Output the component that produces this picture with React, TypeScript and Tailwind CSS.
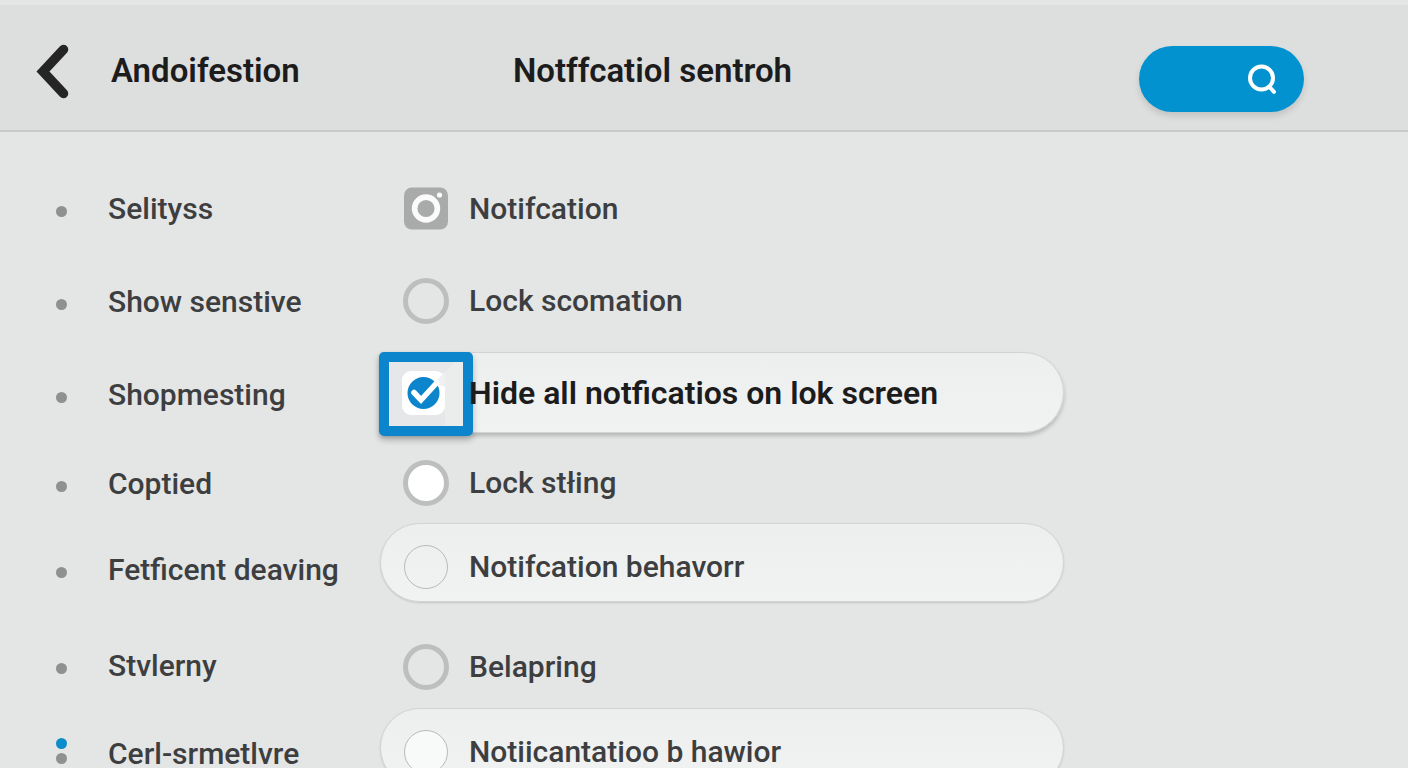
import { useState } from 'react';

const BEHAVIOR_PILL = 'h-[79px] border border-[#d2d4d4] bg-gradient-to-b from-[#edeeee] to-[#f1f2f2] rounded-full pt-2 pl-[22px] shadow-[0_1px_2px_rgba(0,0,0,0.14)]';

const NAV_ITEMS = [
  { label: 'Selityss',          row: 'h-[92px]' },
  { label: 'Show senstive',     row: 'h-[94px]' },
  { label: 'Shopmesting',       row: 'h-[92px]' },
  { label: 'Coptied',           row: 'h-[86px]' },
  { label: 'Fetficent deaving', row: 'h-[86px]' },
  { label: 'Stvlerny',          row: 'h-[106px]' },
  { label: 'Cerl-srmetlvre',    row: 'h-[70px]', active: true },
];

const ring = 'size-[46px] border-[5px] border-[#bdbfbf]';
const thin = 'size-11 mx-px border border-[#b9bbbb]';

function BackIcon() {
  return (
    <svg width="34" height="56" viewBox="0 0 34 56" fill="none" aria-hidden="true">
      <path d="M28.5 6.5 L8 28.5 L28.5 50.5" stroke="#252525" strokeWidth="9.5" strokeLinecap="round" strokeLinejoin="miter" />
    </svg>
  );
}

function SearchIcon() {
  return (
    <svg width="32" height="32" viewBox="0 0 32 32" fill="none" aria-hidden="true">
      <circle cx="15.5" cy="15" r="11.5" stroke="#fff" strokeWidth="4" />
      <path d="M23.5 24 L28 28.8" stroke="#fff" strokeWidth="4" strokeLinecap="round" />
    </svg>
  );
}

function CameraIcon() {
  return (
    <svg width="44" height="44" viewBox="0 0 44 44" className="mx-px" aria-hidden="true">
      <rect y="0.5" width="44" height="42" rx="8" fill="#a9aaaa" />
      <circle cx="22" cy="21.5" r="11.4" fill="none" stroke="#fbfbfb" strokeWidth="5.6" />
      <circle cx="35.5" cy="8" r="2.6" fill="#fbfbfb" />
    </svg>
  );
}

function CheckIcon() {
  return (
    <svg width="74" height="64" viewBox="0 0 74 64" className="pointer-events-none col-start-1 row-start-1" aria-hidden="true">
      <rect width="74" height="64" fill="#e6e7e9" />
      <path d="M66 0 H74 V64 H56 V10 Z" fill="#ebecec" />
      <rect x="13" y="9" width="43" height="44" rx="9" fill="#fff" />
      <path d="M56 10 L45 21 L56 25 Z" fill="#eff0f1" />
      <circle cx="34.5" cy="31" r="16" fill="#0c85cd" />
      <path d="M25 30.5 L32 38 L48 20.5" fill="none" stroke="#fff" strokeWidth="5.5" strokeLinecap="round" />
    </svg>
  );
}

interface RadioProps {
  value: string;
  label: string;
  look: string;
  row: string;
  selected: string;
  onSelect: (v: string) => void;
}

function RadioRow({ value, label, look, row, selected, onSelect }: RadioProps) {
  return (
    <label className={'flex items-center gap-5 whitespace-nowrap ' + row}>
      <input type="radio" name="lock" value={value} checked={selected === value} onChange={() => onSelect(value)}
        className={'appearance-none shrink-0 rounded-full ' + look} />
      <span>{label}</span>
    </label>
  );
}

export default function App() {
  const [selected, setSelected] = useState('string');
  const [hideAll, setHideAll] = useState(true);
  const radio = { selected, onSelect: setSelected };

  return (
    <div className="h-screen overflow-hidden bg-[#e4e5e5] font-['Roboto',sans-serif] text-[30px] leading-10 font-medium text-[#3d3e40]">
      <header className="mt-[5px] flex h-[127px] items-center border-b-2 border-[#c9cbcb] bg-[#dddede] pt-1.5 pr-[104px] pl-[35px] text-[33px] font-semibold text-[#1c1c1c]">
        <button type="button" aria-label="Back" className="w-[76px] shrink-0">
          <BackIcon />
        </button>
        <h1 className="w-[402px] shrink-0">Andoifestion</h1>
        <h2 className="whitespace-nowrap">Notffcatiol sentroh</h2>
        <button type="button" aria-label="Search"
          className="mt-4 ml-auto flex h-[66px] w-[165px] shrink-0 items-center justify-end rounded-full bg-[#0292d0] pr-[26px] shadow-[0_4px_6px_rgba(0,0,0,0.12)]">
          <SearchIcon />
        </button>
      </header>

      <main className="flex pt-[31px]">
        <nav className="w-[380px] shrink-0">
          <ul>
            {NAV_ITEMS.map(item => (
              <li key={item.label}>
                <a href="#" className={'flex items-center gap-[41px] pl-14 whitespace-nowrap ' + item.row}>
                  <span className="flex flex-col gap-1 pt-1">
                    {item.active && <span className="-mt-[11px] size-[11px] rounded-full bg-[#0c8dcb]" />}
                    <span className="size-[11px] rounded-full bg-[#8f9090]" />
                  </span>
                  {item.label}
                </a>
              </li>
            ))}
          </ul>
        </nav>

        <section className="max-w-[684px] flex-1">
          <div className="flex h-[92px] items-center gap-5 pl-[23px]">
            <CameraIcon />
            <span>Notifcation</span>
          </div>
          <RadioRow value="information" label="Lock scomation" look={ring} row="h-[92px] pl-[23px]" {...radio} />

          <label className="my-[5px] flex h-[81px] items-center rounded-r-full border border-[#d2d4d4] bg-gradient-to-b from-[#edeeee] to-[#f1f2f2] text-[32px] font-semibold whitespace-nowrap text-[#1c1c1c] shadow-[0_3px_4px_rgba(0,0,0,0.2)]">
            <span className="-mt-0.5 -mb-1 -ml-[2px] grid shrink-0 rounded-[5px] border-10 border-[#0c85cd] shadow-[0_4px_6px_rgba(0,0,0,0.25)]">
              <input type="checkbox" checked={hideAll} onChange={e => setHideAll(e.target.checked)}
                className="col-start-1 row-start-1 size-full appearance-none" />
              <CheckIcon />
            </span>
            <span className="relative -ml-1">Hide all notficatios on lok screen</span>
          </label>

          <RadioRow value="string" label="Lock stłing" look={ring + ' bg-white'} row="h-[85px] pt-1 pl-[23px]" {...radio} />
          <RadioRow value="behavior" label="Notifcation behavorr" look={thin} row={BEHAVIOR_PILL} {...radio} />
          <RadioRow value="belapring" label="Belapring" look={ring} row="h-[106px] pt-6 pl-[23px]" {...radio} />
          <RadioRow value="other" label="Notiicantatioo b hawior" look={thin + ' bg-[#f8f9f9]'} row={BEHAVIOR_PILL} {...radio} />
        </section>
      </main>
    </div>
  );
}
